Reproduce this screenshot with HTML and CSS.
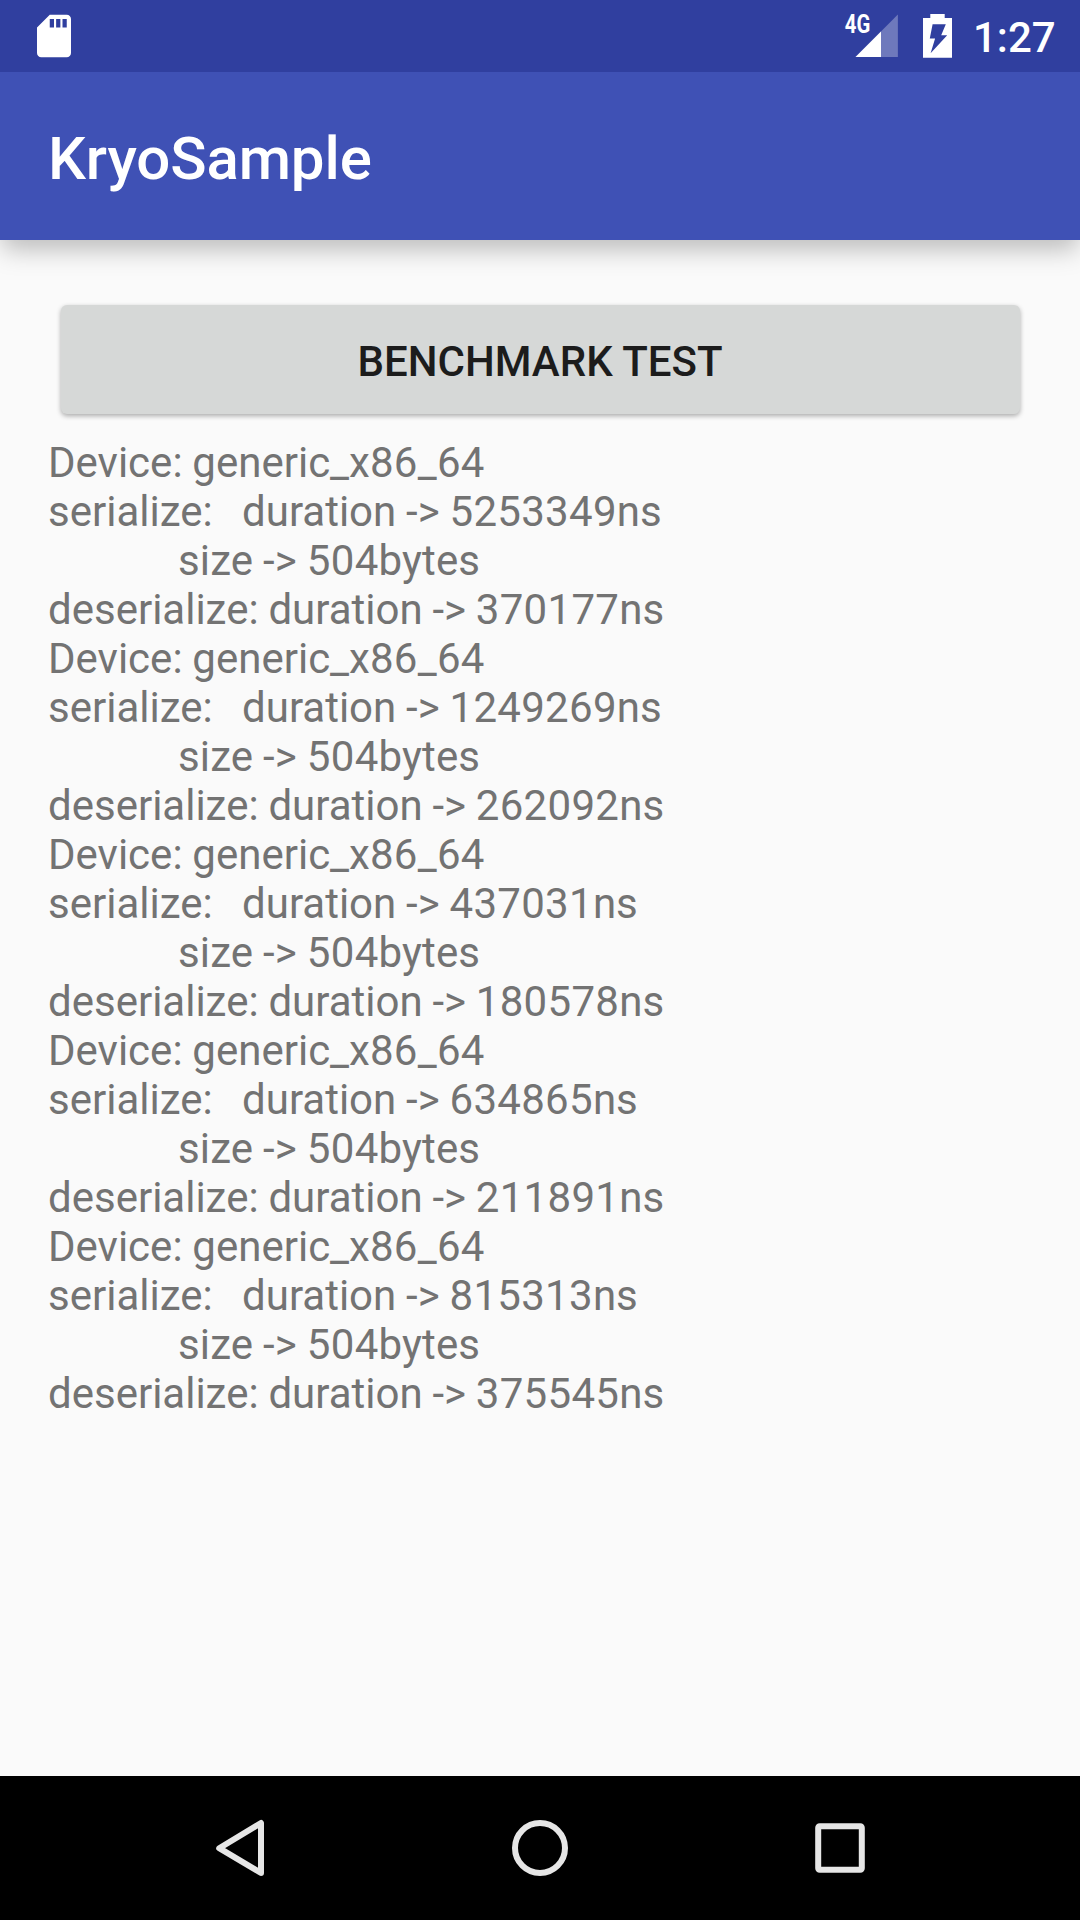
FILE: index.html
```html
<!DOCTYPE html>
<html lang="en">
<head>
<meta charset="utf-8">
<title>KryoSample</title>
<link rel="stylesheet" href="styles.css">
</head>
<body>
<div class="screen">
  <div class="status-bar">
    <svg class="icon-sd" viewBox="0 0 51 51"><path transform="translate(.5 .5) scale(2.125)" fill="#fff" d="M18 2h-8L4 8v12c0 1.1.9 2 2 2h12c1.1 0 2-.9 2-2V4c0-1.1-.9-2-2-2zm-6 6h-2V4h2v4zm3 0h-2V4h2v4zm3 0h-2V4h2v4z"/></svg>
    <div class="status-right">
      <svg class="icon-signal" viewBox="0 0 54 44">
        <path fill="#fff" fill-opacity=".3" d="M53.9 .6v42.4H11.5z"/>
        <path fill="#fff" d="M37 17.5V43H11.5z"/>
        <text class="network" x="0.8" y="19.4" textLength="25.5" lengthAdjust="spacingAndGlyphs">4G</text>
      </svg>
      <svg class="icon-battery" viewBox="0 0 29 44"><path fill="#fff" fill-rule="evenodd" d="M7.3 0h14.4v4H29v39.7H0V4h7.3zM9.6 10.3L6.8 24.5h5.3L7.6 39.3 24.2 21.3h-6L22.8 10.3z"/></svg>
      <span class="clock">1:27</span>
    </div>
  </div>
  <header class="app-bar"><h1 class="title">KryoSample</h1></header>
  <main class="content">
    <button class="benchmark" type="button">BENCHMARK TEST</button>
    <div class="log">
      <div class="line">Device: generic_x<span class="num">86_64</span></div>
      <div class="line">serialize:   duration -&gt; <span class="num">5253349</span>ns</div>
      <div class="line size">size -&gt; <span class="num">504</span>bytes</div>
      <div class="line">deserialize: duration -&gt; <span class="num">370177</span>ns</div>
      <div class="line">Device: generic_x<span class="num">86_64</span></div>
      <div class="line">serialize:   duration -&gt; <span class="num">1249269</span>ns</div>
      <div class="line size">size -&gt; <span class="num">504</span>bytes</div>
      <div class="line">deserialize: duration -&gt; <span class="num">262092</span>ns</div>
      <div class="line">Device: generic_x<span class="num">86_64</span></div>
      <div class="line">serialize:   duration -&gt; <span class="num">437031</span>ns</div>
      <div class="line size">size -&gt; <span class="num">504</span>bytes</div>
      <div class="line">deserialize: duration -&gt; <span class="num">180578</span>ns</div>
      <div class="line">Device: generic_x<span class="num">86_64</span></div>
      <div class="line">serialize:   duration -&gt; <span class="num">634865</span>ns</div>
      <div class="line size">size -&gt; <span class="num">504</span>bytes</div>
      <div class="line">deserialize: duration -&gt; <span class="num">211891</span>ns</div>
      <div class="line">Device: generic_x<span class="num">86_64</span></div>
      <div class="line">serialize:   duration -&gt; <span class="num">815313</span>ns</div>
      <div class="line size">size -&gt; <span class="num">504</span>bytes</div>
      <div class="line">deserialize: duration -&gt; <span class="num">375545</span>ns</div>
    </div>
  </main>
  <nav class="nav-bar">
    <svg class="nav-icon" viewBox="0 0 60 60"><path d="M51 5v50L9.2 30.2z"/></svg>
    <svg class="nav-icon" viewBox="0 0 60 60"><circle cx="30" cy="30" r="25"/></svg>
    <svg class="nav-icon" viewBox="0 0 60 60"><rect x="8.2" y="8.2" width="43.6" height="43.6" rx="1.5"/></svg>
  </nav>
</div>
</body>
</html>
```
FILE: styles.css
```css
* {
  box-sizing: border-box;
}

body {
  margin: 0;
  font-family: Roboto, "Noto Sans", sans-serif;
}

.screen {
  display: flex;
  flex-direction: column;
  width: 1080px;
  height: 1920px;
  overflow: hidden;
  background: #fafafa;
}

.status-bar {
  display: flex;
  flex: none;
  justify-content: space-between;
  height: 72px;
  padding: 0 25px 0 28px;
  background: #303f9f;
}

.icon-sd {
  width: 51px;
  height: 51px;
  margin-top: 10px;
}

.status-right {
  display: flex;
  align-items: flex-start;
}

.icon-signal {
  width: 54px;
  height: 44px;
  margin: 14px 25px 0 0;
  overflow: visible;
}

.network {
  font-size: 25.5px;
  font-weight: 700;
  fill: #fff;
}

.icon-battery {
  width: 29px;
  height: 44px;
  margin: 14px 21px 0 0;
}

.clock {
  width: 82px;
  margin-top: 13px;
  font-size: 42px;
  font-weight: 500;
  line-height: 49px;
  color: #fff;
  white-space: nowrap;
}

.app-bar {
  display: flex;
  flex: none;
  align-items: center;
  height: 168px;
  padding: 5px 48px 0;
  background: #3f51b5;
  box-shadow: 0 11px 24px -2px rgba(0, 0, 0, 0.26);
  clip-path: inset(0 0 -60px);
}

.title {
  margin: 0;
  font-size: 60px;
  font-weight: 500;
  line-height: 70px;
  letter-spacing: -0.1px;
  color: #fff;
}

.content {
  display: flex;
  flex: 1;
  flex-direction: column;
  padding: 65px 48px 0;
}

.benchmark {
  height: 109px;
  margin: 0 12.5px 24px;
  padding: 3px 0 0;
  border: 0;
  border-radius: 6px;
  background: #d6d8d7;
  box-shadow: 0 2px 5px rgba(0, 0, 0, 0.32);
  font: 500 42px/49px Roboto, "Noto Sans", sans-serif;
  color: #1c1c1c;
}

.log {
  font-size: 42px;
  line-height: 49px;
  color: #737373;
  word-spacing: -0.6px;
}

.line {
  white-space: pre;
}

.num {
  letter-spacing: 0.3px;
}

.size {
  padding-left: 130px;
  letter-spacing: 0.12px;
}

.nav-bar {
  display: flex;
  flex: none;
  align-items: center;
  justify-content: center;
  gap: 240px;
  height: 144px;
  background: #000;
}

.nav-icon {
  width: 60px;
  height: 60px;
  fill: none;
  stroke: #e6e6e6;
  stroke-width: 6;
  stroke-linejoin: round;
}
```
